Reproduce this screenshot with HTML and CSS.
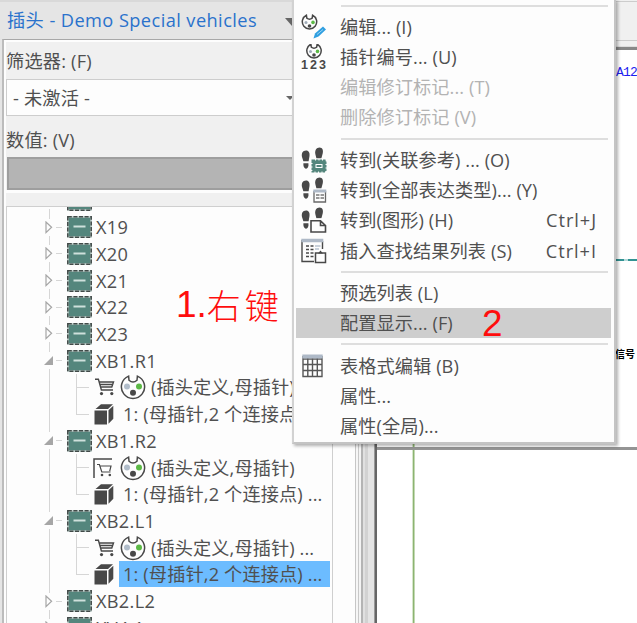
FILE: index.html
```html
<!DOCTYPE html>
<html lang="zh-CN">
<head>
<meta charset="utf-8">
<title>插头 - Demo Special vehicles</title>
<link rel="stylesheet" href="styles.css">
</head>
<body>
<svg class="defs" aria-hidden="true">
  <symbol id="plug" viewBox="0 0 25 22">
    <rect x="1" y="1" width="23" height="20" fill="#54867d" stroke="#b9cbc7" stroke-width="1.6"/>
    <rect x=".8" y=".8" width="23.4" height="20.4" fill="none" stroke="#414a48" stroke-width="1.5" stroke-dasharray="4 1.6"/>
    <path d="M6.5 10.5h12" stroke="#cfe0dc" stroke-width="2"/>
  </symbol>
  <symbol id="closed" viewBox="0 0 8 13"><path d="M1 1v10.6L6.6 6.3z" fill="#fdfdfd" stroke="#a6a6a6" stroke-width="1.2"/></symbol>
  <symbol id="open" viewBox="0 0 9 9"><path d="M9 0v9H0z" fill="#a6a6a6"/></symbol>
  <symbol id="cart" viewBox="0 0 20 18">
    <path d="M0 1.3h3.4l3 10.7h11.6M4 4h14.5l-1.7 5H5.6M4.6 6.5h13" fill="none" stroke="#484848" stroke-width="1.4"/>
    <circle cx="6.5" cy="15.6" r="1.6" fill="#484848"/><circle cx="16.8" cy="15.6" r="1.6" fill="#484848"/>
  </symbol>
  <symbol id="cartref" viewBox="0 0 20 20">
    <path d="M1 20V1h18" fill="none" stroke="#484848" stroke-width="1.5"/>
    <path d="M4 6.5h2.4l2.4 7.5h8.7M7 8h11l-1.3 5.2" fill="none" stroke="#484848" stroke-width="1.2"/>
    <circle cx="9" cy="17" r="1.3" fill="#484848"/><circle cx="16.8" cy="17" r="1.3" fill="#484848"/>
  </symbol>
  <symbol id="socket" viewBox="0 0 26 26">
    <path d="M8.6 2.1A11.6 11.6 0 1 0 17.4 2.1L17 6.2Q13 9.8 9 6.2z" fill="#fdfdfd" stroke="#484848" stroke-width="1.5"/>
    <circle cx="7" cy="12.6" r="3" fill="#b1bdca"/><circle cx="19" cy="12.6" r="3" fill="#5cb946"/><circle cx="13" cy="18.8" r="3" fill="#484848"/>
  </symbol>
  <symbol id="minisocket" viewBox="0 0 17 17">
    <path d="M5.4 1.2A7.2 7.2 0 1 0 11.6 1.2L11.2 4.2Q8.5 6.2 5.8 4.2z" fill="#fdfdfd" stroke="#484848" stroke-width="1.5"/>
    <circle cx="5" cy="8.4" r="1.5" fill="#9fabb8"/><circle cx="12" cy="8.4" r="1.8" fill="#5cb946"/><circle cx="8.5" cy="12" r="1.8" fill="#484848"/>
  </symbol>
  <symbol id="cube" viewBox="0 0 20 21">
    <path d="M.5 6.5H13v14H.5zM1.5 5L7 .3h12L14 5zM14.5 6.2l4.8-4.4v13l-4.8 5z" fill="#484848"/>
  </symbol>
  <symbol id="feet" viewBox="0 0 26 26">
    <path d="M5 3.5c3 0 3.900 2.600 3.500 5.400L7.600 14.300H2.400L1 10C.2 6.300 1.800 3.500 5 3.500zM2.400 16.300h5c1 6.500-4.300 7-5 2zM18.500.6c3 0 4 3 3.200 5.800l-1.300 4.800h-5L14.300 7c-.6-3.600 1.300-6.400 4.200-6.400z" fill="#484848"/>
  </symbol>
</svg>

<main class="desktop">
  <section class="dock">
    <header class="dock-title"><span>插头 - Demo Special vehicles</span><i class="tri big"></i></header>
    <div class="dock-body">
      <div class="form">
        <label class="label">筛选器: (F)</label>
        <div class="combo"><span>- 未激活 -</span><i class="tri"></i></div>
        <label class="label value">数值: (V)</label>
        <div class="input"></div>
      </div>
      <div class="lower">
        <div class="tree">
          <div class="row"><span class="arm"><svg class="closed"><use href="#closed"/></svg></span><svg class="plug"><use href="#plug"/></svg></div>
          <div class="row"><span class="arm"><svg class="closed"><use href="#closed"/></svg></span><svg class="plug"><use href="#plug"/></svg><span class="name">X19</span></div>
          <div class="row"><span class="arm"><svg class="closed"><use href="#closed"/></svg></span><svg class="plug"><use href="#plug"/></svg><span class="name">X20</span></div>
          <div class="row"><span class="arm"><svg class="closed"><use href="#closed"/></svg></span><svg class="plug"><use href="#plug"/></svg><span class="name">X21</span></div>
          <div class="row"><span class="arm"><svg class="closed"><use href="#closed"/></svg></span><svg class="plug"><use href="#plug"/></svg><span class="name">X22</span></div>
          <div class="row"><span class="arm"><svg class="closed"><use href="#closed"/></svg></span><svg class="plug"><use href="#plug"/></svg><span class="name">X23</span></div>
          <div class="row"><span class="arm"><svg class="open"><use href="#open"/></svg></span><svg class="plug"><use href="#plug"/></svg><span class="name">XB1.R1</span></div>
          <div class="row"><span class="trunk"></span><span class="branch"></span><svg class="cart"><use href="#cart"/></svg><svg class="socket"><use href="#socket"/></svg><span class="leaf">(插头定义,母插针)</span></div>
          <div class="row"><span class="trunk"></span><span class="branch last"></span><svg class="cube"><use href="#cube"/></svg><span class="leaf pick">1: (母插针,2 个连接点) ...</span></div>
          <div class="row"><span class="arm"><svg class="open"><use href="#open"/></svg></span><svg class="plug"><use href="#plug"/></svg><span class="name">XB1.R2</span></div>
          <div class="row"><span class="trunk"></span><span class="branch"></span><svg class="cart ref"><use href="#cartref"/></svg><svg class="socket"><use href="#socket"/></svg><span class="leaf">(插头定义,母插针)</span></div>
          <div class="row"><span class="trunk"></span><span class="branch last"></span><svg class="cube"><use href="#cube"/></svg><span class="leaf pick">1: (母插针,2 个连接点) ...</span></div>
          <div class="row"><span class="arm"><svg class="open"><use href="#open"/></svg></span><svg class="plug"><use href="#plug"/></svg><span class="name">XB2.L1</span></div>
          <div class="row"><span class="trunk"></span><span class="branch"></span><svg class="cart"><use href="#cart"/></svg><svg class="socket"><use href="#socket"/></svg><span class="leaf">(插头定义,母插针) ...</span></div>
          <div class="row"><span class="trunk"></span><span class="branch last"></span><svg class="cube"><use href="#cube"/></svg><span class="leaf pick selected">1: (母插针,2 个连接点) ...</span></div>
          <div class="row"><span class="arm"><svg class="closed"><use href="#closed"/></svg></span><svg class="plug"><use href="#plug"/></svg><span class="name">XB2.L2</span></div>
          <div class="row"><span class="arm"><svg class="closed"><use href="#closed"/></svg></span><svg class="plug"><use href="#plug"/></svg><span class="name">XV4.1</span></div>
        </div>
      </div>
    </div>
  </section>
  <div class="splitter"></div>
  <section class="editor">
    <div class="tabs"></div>
    <div class="sheet">
      <i class="wire"></i>
      <i class="bus"></i>
      <span class="tag">A12</span>
      <span class="signal">信号</span>
    </div>
    <div class="sheet below"><i class="wire"></i></div>
  </section>
</main>

<nav class="menu">
  <hr>
  <div class="item">
    <svg class="ico" viewBox="0 0 26 26"><use href="#minisocket" width="17" height="17"/><path d="M12.5 24.5l1.500-5 8-7 3 3-7.500 7z" fill="#2f9fe0"/><path d="M16 20.500l6-5" stroke="#9bd3f5"/></svg>
    <span>编辑... (I)</span></div>
  <div class="item">
    <svg class="ico" viewBox="0 0 26 26"><use href="#minisocket" x="4.500" y="-1" width="17" height="17"/><text x="0" y="25" class="digits">123</text></svg>
    <span>插针编号... (U)</span></div>
  <div class="item off"><span>编辑修订标记... (T)</span></div>
  <div class="item off"><span>删除修订标记 (V)</span></div>
  <hr>
  <div class="item">
    <svg class="ico" viewBox="0 0 26 26"><use href="#feet" width="26" height="26"/><rect x="10" y="12" width="16" height="14" fill="#fdfdfd"/><rect x="11.500" y="13.500" width="13" height="11" fill="#54867d" stroke="#54867d" stroke-width="2" stroke-dasharray="2.500 1"/><rect x="15" y="17.500" width="6" height="3" fill="none" stroke="#fff"/></svg>
    <span>转到(关联参考) ... (O)</span></div>
  <div class="item">
    <svg class="ico" viewBox="0 0 26 26"><use href="#feet" width="26" height="26"/><rect x="11" y="12" width="15" height="14" fill="#fdfdfd"/><path d="M13 14v11h11.500V14" fill="none" stroke="#686868" stroke-width="1.300"/><path d="M12.300 14h13" stroke="#aeb9c7" stroke-width="3"/><path d="M15 18h3.500m1 0H23M15 21h3.500m1 0H23" stroke="#777" stroke-width="1.500"/></svg>
    <span>转到(全部表达类型)... (Y)</span></div>
  <div class="item">
    <svg class="ico" viewBox="0 0 26 26"><use href="#feet" width="26" height="26"/><path d="M10 13.500h10.500l4 4V25H10z" fill="#fdfdfd" stroke="#fdfdfd" stroke-width="4"/><path d="M10 13.800h9.500l5 4.700V25H10zM19.500 13.800v4.700h5" fill="#fdfdfd" stroke="#484848" stroke-width="1.600"/></svg>
    <span>转到(图形) (H)</span><kbd>Ctrl+J</kbd></div>
  <div class="item">
    <svg class="ico" viewBox="0 0 26 26"><path d="M1 2v21.500h12M21.500 3v8" fill="none" stroke="#484848" stroke-width="1.400"/><path d="M.3 2.500h22" stroke="#aeb9c7" stroke-width="3.500"/><path d="M5 8h3m1.500 0h3M5 11.500h3m1.500 0h3M5 15h3m1.500 0h3M5 18.500h3m1.500 0h3" stroke="#484848" stroke-width="1.700"/><path d="M14 8h5.500M14 11h4" stroke="#b7c2cf" stroke-width="1.300"/><path d="M14.500 15h10v9.500h-10z" fill="#fdfdfd" stroke="#484848" stroke-width="1.500"/><path d="M17 15.500l2.500-3 2.500 3z" fill="#484848"/></svg>
    <span>插入查找结果列表 (S)</span><kbd>Ctrl+I</kbd></div>
  <hr>
  <div class="item"><span>预选列表 (L)</span></div>
  <div class="item hot"><span>配置显示... (F)</span></div>
  <hr>
  <div class="item">
    <svg class="ico" viewBox="0 0 26 26"><path d="M2 3v20.500h19V3M6.800 5v19M11.500 5v19M16.300 5v19M2 11.500h19M2 17.500h19M2 6h19" fill="none" stroke="#565656" stroke-width="1.400"/><path d="M1.300 3.500h20.400" stroke="#aeb9c7" stroke-width="4"/></svg>
    <span>表格式编辑 (B)</span></div>
  <div class="item"><span>属性...</span></div>
  <div class="item"><span>属性(全局)...</span></div>
</nav>

<div class="note step1"><span>1.</span><span class="han">右键</span></div>
<div class="note step2">2</div>
</body>
</html>
```
FILE: styles.css
```css
* { box-sizing: border-box; }
body {
  margin: 0; width: 637px; height: 623px; overflow: hidden; position: relative;
  font: 18.2px/26px "Open Sans", "Noto Sans CJK SC", sans-serif;
  color: #505050; background: #f0f0f0; white-space: nowrap;
}
svg { display: block; flex: none; }
.defs { position: absolute; width: 0; height: 0; }
.desktop { display: flex; height: 623px; }

.dock { width: 355px; flex: none; display: flex; flex-direction: column; border-top: 2px solid #d9d9d9; background: #e5e5e5; }
.dock-title { height: 37px; flex: none; display: flex; align-items: center; padding: 0 0 2px 7px; color: #2a72cc; letter-spacing: .43px; }
.dock-title span { width: 278px; }
.tri { border: solid transparent; border-width: 4px 4px 0; border-top-color: #666; }
.tri.big { border-width: 8px 7px 0; margin-top: 5px; }
.dock-body { flex: 1; min-height: 0; display: flex; flex-direction: column; margin-left: 2px; border-left: 2px solid #bcbcbc; border-top: 1px solid #a8a8a8; padding: 2px 0 0 2px; background: #fdfdfd; }
.form { flex: none; height: 148px; background: #f0f0f0; }
.label { display: block; height: 37px; line-height: 38px; letter-spacing: .2px; }
.label.value { height: 41px; line-height: 49px; }
.combo { height: 37px; display: flex; align-items: center; border: 1px solid #cdcdcd; padding: 0 0 0 6px; background: #fdfdfd; letter-spacing: .2px; }
.combo span { width: 273px; }
.input { height: 33px; margin-left: 1px; border: 2px solid #9e9e9e; background: #b4b4b4; }
.lower { flex: 1; min-height: 0; margin-top: 3px; padding-top: 13px; background: #f0f0f0; display: flex; }
.tree { width: 327px; flex: none; border: 1px solid #cfcfcf; border-width: 1px 1px 0 1px; background: #fdfdfd; overflow: hidden; height: 420px; box-shadow: 23px 0 #fdfdfd; }
.row { height: 26.72px; display: flex; align-items: center; }
.row:first-child { margin-top: -20px; }
.row:last-child { margin-bottom: -30px; }
.arm, .trunk { width: 59px; height: 100%; flex: none; display: flex; align-items: center; padding-left: 37px;
  background: linear-gradient(#d6d6d6, #d6d6d6) 42px 0 / 1px 100% no-repeat; }
.arm { background: linear-gradient(#fdfdfd, #fdfdfd) 37px 50% / 10px 17px no-repeat, linear-gradient(#d6d6d6, #d6d6d6) 42px 0 / 1px 100% no-repeat, linear-gradient(#d6d6d6, #d6d6d6) 49px 50% / 6px 1px no-repeat; }
.closed { width: 8px; height: 13px; margin-left: 1px; }
.open { width: 9px; height: 9px; }
.plug { width: 25px; height: 22px; margin: 0 4px 0 1px; }
.name { letter-spacing: .3px; }
.branch { width: 27px; height: 100%; flex: none;
  background: linear-gradient(#d6d6d6, #d6d6d6) 10px 0 / 1px 100% no-repeat, linear-gradient(#d6d6d6, #d6d6d6) 10px 50% / 13px 1px no-repeat; }
.branch.last { background-size: 1px 50%, 13px 1px; }
.cart { width: 20px; height: 18px; margin: 0 5px 0 2px; }
.cart.ref { width: 20px; height: 20px; margin: 0 7px 0 0; }
.socket { width: 26px; height: 26px; }
.leaf { padding-left: 5px; letter-spacing: .1px; }
.cube { width: 20px; height: 21px; margin: 0 5px 0 1px; }
.leaf.pick { width: 211px; padding-left: 4px; letter-spacing: .14px; }
.selected { background: #6cbcff; }

.splitter { width: 22px; flex: none; background: linear-gradient(90deg, #c6c6c6 1px, #f6f6f6 1px 3px, #c8c8c8 3px 4px, #f4f4f4 4px 6px, #b4b4b4 6px 8px, #e0e0e0 8px 10px, #d2d2d2 10px 13px, #e4e4e4 13px 19px, #999 19px 20px, #666 20px 22px); }
.editor { flex: 1; display: flex; flex-direction: column; background: #fff; }
.tabs { height: 50px; flex: none; background: linear-gradient(#f0f0f0 1px, #ccc 1px 2px, #f0f0f0 2px 40px, #ccc 40px 41px, #f0f0f0 41px 46px, #ddd 46px 47px, #888 47px); }
.sheet { height: 400px; flex: none; position: relative; border-bottom: 3px solid #949494; }
.sheet.below { height: 173px; border: 0; }
.wire { position: absolute; left: 35px; top: 0; bottom: 0; width: 3px; background: linear-gradient(90deg, #d6e5cb 1px, #8cb471 1px 2px, #c3d8b4 2px); }
.bus { position: absolute; left: 238px; right: 0; top: 209px; height: 2px; background: linear-gradient(90deg, #329393 9px, #b4dada 9px 13px, #329393 13px); }
.tag { position: absolute; left: 239px; top: 13px; font: 13px/20px "Liberation Mono", monospace; letter-spacing: -.8px; color: #1d1df0; }
.signal { position: absolute; left: 238px; top: 294px; font: bold 10px/20px "Noto Sans CJK SC", sans-serif; color: #000; }

.menu { position: absolute; left: 292px; top: -1px; width: 324px; height: 445px; padding: .5px 3px 0 2px; border: solid #c4c4c4; border-width: 0 2px 2px; border-left-color: #d2d2d2; background: #fdfdfd; box-shadow: 2px 2px 3px rgba(0, 0, 0, .3); }
.menu hr { height: 2px; margin: 5px 3px 5.1px 45px; border: 0; background: #dedede; }
.item { height: 30.25px; display: flex; align-items: center; padding: 0 14px 0 44px; letter-spacing: .08px; }
.item .ico { width: 26px; height: 26px; margin: 0 13px 0 -39px; }
.item kbd { margin-left: auto; font: inherit; letter-spacing: .95px; }
.off { color: #b3b3b3; }
.hot { background: #cecece; }
.digits { font: bold 12.5px "Liberation Sans", sans-serif; letter-spacing: 2px; fill: #484848; }

.note { position: absolute; color: #ff0d0d; font: 37px/40px "Liberation Sans", "Noto Sans CJK SC", sans-serif; }
.step1 { left: 176px; top: 285px; display: flex; }
.han { font-family: "Noto Sans CJK SC", sans-serif; font-weight: 300; font-size: 34px; letter-spacing: 4px; }
.step2 { left: 482px; top: 304px; }
```
